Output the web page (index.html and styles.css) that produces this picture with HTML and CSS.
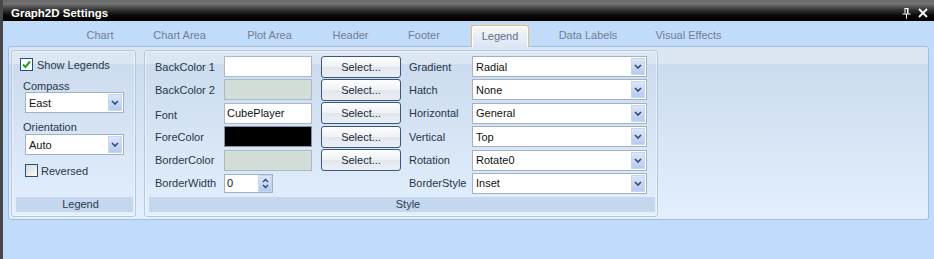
FILE: index.html
```html
<!DOCTYPE html>
<html>
<head>
<meta charset="utf-8">
<link rel="stylesheet" href="styles.css">
</head>
<body>
<div class="window">
  <div class="titlebar">
    <span class="title">Graph2D Settings</span>
    <div class="title-icons">
      <svg class="pin" width="9" height="11" viewBox="0 0 9 11"><path d="M2.5 0.5h4M3 0.5v5M6 0.5v5M5.5 0.5v5M0.5 6h8M4.5 6v4.5" stroke="#fff" stroke-width="1" fill="none"/></svg>
      <svg class="close" width="10" height="10" viewBox="0 0 10 10"><path d="M1 1L9 9M9 1L1 9" stroke="#fff" stroke-width="1.8"/></svg>
    </div>
  </div>
  <div class="tabs">
    <div class="tab">Chart</div>
    <div class="tab">Chart Area</div>
    <div class="tab">Plot Area</div>
    <div class="tab">Header</div>
    <div class="tab">Footer</div>
    <div class="tab tab-active"><span>Legend</span></div>
    <div class="tab">Data Labels</div>
    <div class="tab">Visual Effects</div>
  </div>
  <div class="panel">
    <div class="group group-legend">
      <div class="group-body legend-body">
        <div class="check-row show-row">
          <span class="cb checked"><svg width="11" height="11" viewBox="0 0 11 11"><path d="M2 5.5L4.5 8L9 2.5" stroke="#22a12a" stroke-width="2" fill="none"/></svg></span>
          <span>Show Legends</span>
        </div>
        <div class="field-lbl">Compass</div>
        <div class="combo combo-small"><span class="combo-text">East</span><span class="combo-btn"><svg width="8" height="5" viewBox="0 0 8 5"><path d="M1 1L4 4L7 1" stroke="#2c4a75" stroke-width="1.6" fill="none"/></svg></span></div>
        <div class="field-lbl">Orientation</div>
        <div class="combo combo-small combo-second"><span class="combo-text">Auto</span><span class="combo-btn"><svg width="8" height="5" viewBox="0 0 8 5"><path d="M1 1L4 4L7 1" stroke="#2c4a75" stroke-width="1.6" fill="none"/></svg></span></div>
        <div class="check-row rev-row">
          <span class="cb"></span>
          <span>Reversed</span>
        </div>
      </div>
      <div class="group-footer">Legend</div>
    </div>
    <div class="group group-style">
      <div class="group-body style-body">
        <span class="lbl">BackColor 1</span>
        <span class="colorbox"></span>
        <button class="btn">Select...</button>
        <span class="lbl">Gradient</span>
        <div class="combo"><span class="combo-text">Radial</span><span class="combo-btn"><svg width="8" height="5" viewBox="0 0 8 5"><path d="M1 1L4 4L7 1" stroke="#2c4a75" stroke-width="1.6" fill="none"/></svg></span></div>

        <span class="lbl">BackColor 2</span>
        <span class="colorbox disabled"></span>
        <button class="btn">Select...</button>
        <span class="lbl">Hatch</span>
        <div class="combo"><span class="combo-text">None</span><span class="combo-btn"><svg width="8" height="5" viewBox="0 0 8 5"><path d="M1 1L4 4L7 1" stroke="#2c4a75" stroke-width="1.6" fill="none"/></svg></span></div>

        <span class="lbl lbl-low">Font</span>
        <span class="colorbox textbox">CubePlayer</span>
        <button class="btn">Select...</button>
        <span class="lbl">Horizontal</span>
        <div class="combo"><span class="combo-text">General</span><span class="combo-btn"><svg width="8" height="5" viewBox="0 0 8 5"><path d="M1 1L4 4L7 1" stroke="#2c4a75" stroke-width="1.6" fill="none"/></svg></span></div>

        <span class="lbl">ForeColor</span>
        <span class="colorbox black"></span>
        <button class="btn">Select...</button>
        <span class="lbl">Vertical</span>
        <div class="combo"><span class="combo-text">Top</span><span class="combo-btn"><svg width="8" height="5" viewBox="0 0 8 5"><path d="M1 1L4 4L7 1" stroke="#2c4a75" stroke-width="1.6" fill="none"/></svg></span></div>

        <span class="lbl">BorderColor</span>
        <span class="colorbox disabled"></span>
        <button class="btn">Select...</button>
        <span class="lbl">Rotation</span>
        <div class="combo"><span class="combo-text">Rotate0</span><span class="combo-btn"><svg width="8" height="5" viewBox="0 0 8 5"><path d="M1 1L4 4L7 1" stroke="#2c4a75" stroke-width="1.6" fill="none"/></svg></span></div>

        <span class="lbl">BorderWidth</span>
        <div class="spin"><span class="spin-text">0</span><span class="spin-btn"><svg width="7" height="11" viewBox="0 0 7 11"><path d="M1 4L3.5 1.5L6 4M1 7L3.5 9.5L6 7" stroke="#2c4a75" stroke-width="1.4" fill="none"/></svg></span></div>
        <span></span>
        <span class="lbl">BorderStyle</span>
        <div class="combo"><span class="combo-text">Inset</span><span class="combo-btn"><svg width="8" height="5" viewBox="0 0 8 5"><path d="M1 1L4 4L7 1" stroke="#2c4a75" stroke-width="1.6" fill="none"/></svg></span></div>
      </div>
      <div class="group-footer">Style</div>
    </div>
  </div>
</div>
</body>
</html>
```
FILE: styles.css
```css
* { box-sizing: border-box; }
html, body { margin: 0; height: 100%; }
body {
  background: #c1dbfb;
  font-family: "Liberation Sans", Arial, sans-serif;
  font-size: 11px;
  color: #27364a;
  overflow: hidden;
}
.window {
  height: 259px;
  border-left: 3px solid #474747;
  display: flex;
  flex-direction: column;
}
.titlebar {
  height: 21px;
  flex: none;
  display: flex;
  align-items: center;
  padding: 5px 6px 0 8px;
  background: linear-gradient(#6b6b6b 0, #6b6b6b 3px, #7d7d7d 3px, #3c3c3c 9px, #0a0a0a 15px, #000 100%);
  color: #fff;
  font-weight: bold;
  font-size: 11.5px;
}
.title { flex: 1; }
.title-icons { display: flex; align-items: center; gap: 7px; }
.tabs {
  display: grid;
  grid-template-columns: 66px 93px 87px 75px 72px 75px 106px 95px;
  padding-left: 64px;
  height: 25px;
  flex: none;
  position: relative;
  z-index: 1;
}
.tab {
  margin-top: 4px;
  height: 22px;
  line-height: 21px;
  text-align: center;
  color: #6f8094;
  white-space: nowrap;
}
.tab-active span {
  display: inline-block;
  width: 58px;
  height: 22px;
  margin-left: 5px;
  border: 1px solid #e2c07a;
  border-bottom: none;
  border-radius: 3px 3px 0 0;
  background: linear-gradient(#fbf8ec, #e4edf8 55%, #dde7f3);
  box-shadow: inset 1px 1px 0 #fff, inset -1px 0 0 #fff;
  color: #5f7087;
}
.panel {
  margin: 0 5px;
  height: 174px;
  flex: none;
  border: 1px solid #a3bde0;
  border-radius: 3px;
  background: linear-gradient(#dde7f3 0, #dde7f3 17px, #ccdcee 17px, #e3effd 100%);
  display: flex;
  gap: 8px;
  padding: 3px 2px 2px 2px;
}
.group {
  display: flex;
  flex-direction: column;
  border: 1px solid #b3c8e3;
  border-radius: 3px;
  box-shadow: inset 0 0 0 1px rgba(255, 255, 255, 0.45);
}
.group-legend { width: 125px; }
.group-style { width: 514px; }
.group-body { flex: 1; }
.group-footer {
  height: 15px;
  line-height: 15px;
  margin: 0 2px 4px 4px;
  background: #c4d7ee;
  text-align: center;
  padding-left: 12px;
  color: #2b3a4e;
}
.legend-body {
  display: flex;
  flex-direction: column;
  padding-top: 6px;
}
.check-row {
  display: flex;
  align-items: center;
  height: 15px;
  gap: 4px;
  color: #27364a;
}
.show-row { margin-left: 8px; }
.rev-row { margin-left: 13px; margin-top: 8px; gap: 3px; }
.cb {
  width: 13px;
  height: 13px;
  border: 1px solid #1c5180;
  background: linear-gradient(135deg, #d9d9d2, #fbfbf8);
  display: flex;
  align-items: center;
  justify-content: center;
  flex: none;
}
.cb.checked { background: #fff; }
.field-lbl {
  margin-left: 11px;
  margin-top: 8px;
  height: 12px;
  line-height: 12px;
}
.combo {
  display: flex;
  align-items: center;
  height: 21px;
  border: 1px solid #a2b2c6;
  background: #fff;
  padding-left: 3px;
  color: #111;
}
.combo-small { width: 99px; margin-left: 13px; }
.combo-second { margin-top: 1px; }
.combo-text { flex: 1; white-space: nowrap; }
.combo-btn {
  width: 14px;
  height: 17px;
  margin-right: 1px;
  background: linear-gradient(#dbe6f8, #b7cbee);
  border: 1px solid #c8d7f0;
  display: flex;
  align-items: center;
  justify-content: center;
  flex: none;
}
.style-body {
  display: grid;
  grid-template-columns: 69px 88px 97px 63px 175px;
  grid-auto-rows: 21px;
  row-gap: 2.4px;
  align-items: center;
  padding: 5px 0 0 10px;
}
.lbl { white-space: nowrap; color: #27364a; }
.lbl-low { position: relative; top: 2px; }
.colorbox {
  height: 21px;
  border: 1px solid #a9b9cb;
  background: #fff;
}
.colorbox.disabled { background: #d4ded9; }
.colorbox.black { background: #000; border-color: #8494a8; }
.colorbox.textbox { padding-left: 2px; line-height: 19px; color: #111; }
.btn {
  margin-left: 9px;
  width: 80px;
  height: 22px;
  padding: 0;
  border: 1px solid #3d5877;
  border-radius: 3px;
  background: linear-gradient(#fcfdfe, #eff2f6 50%, #e2e7ee 52%, #ebeff5);
  font: inherit;
  color: #1d2a3a;
  text-align: center;
  line-height: 20px;
}
.spin {
  width: 49px;
  height: 19px;
  display: flex;
  align-items: center;
  border: 1px solid #a2b2c6;
  background: #fff;
  padding-left: 2px;
  color: #111;
}
.spin-text { flex: 1; }
.spin-btn {
  width: 14px;
  height: 17px;
  background: linear-gradient(#dbe6f8, #b7cbee);
  border: 1px solid #c8d7f0;
  display: flex;
  align-items: center;
  justify-content: center;
  flex: none;
}
```
